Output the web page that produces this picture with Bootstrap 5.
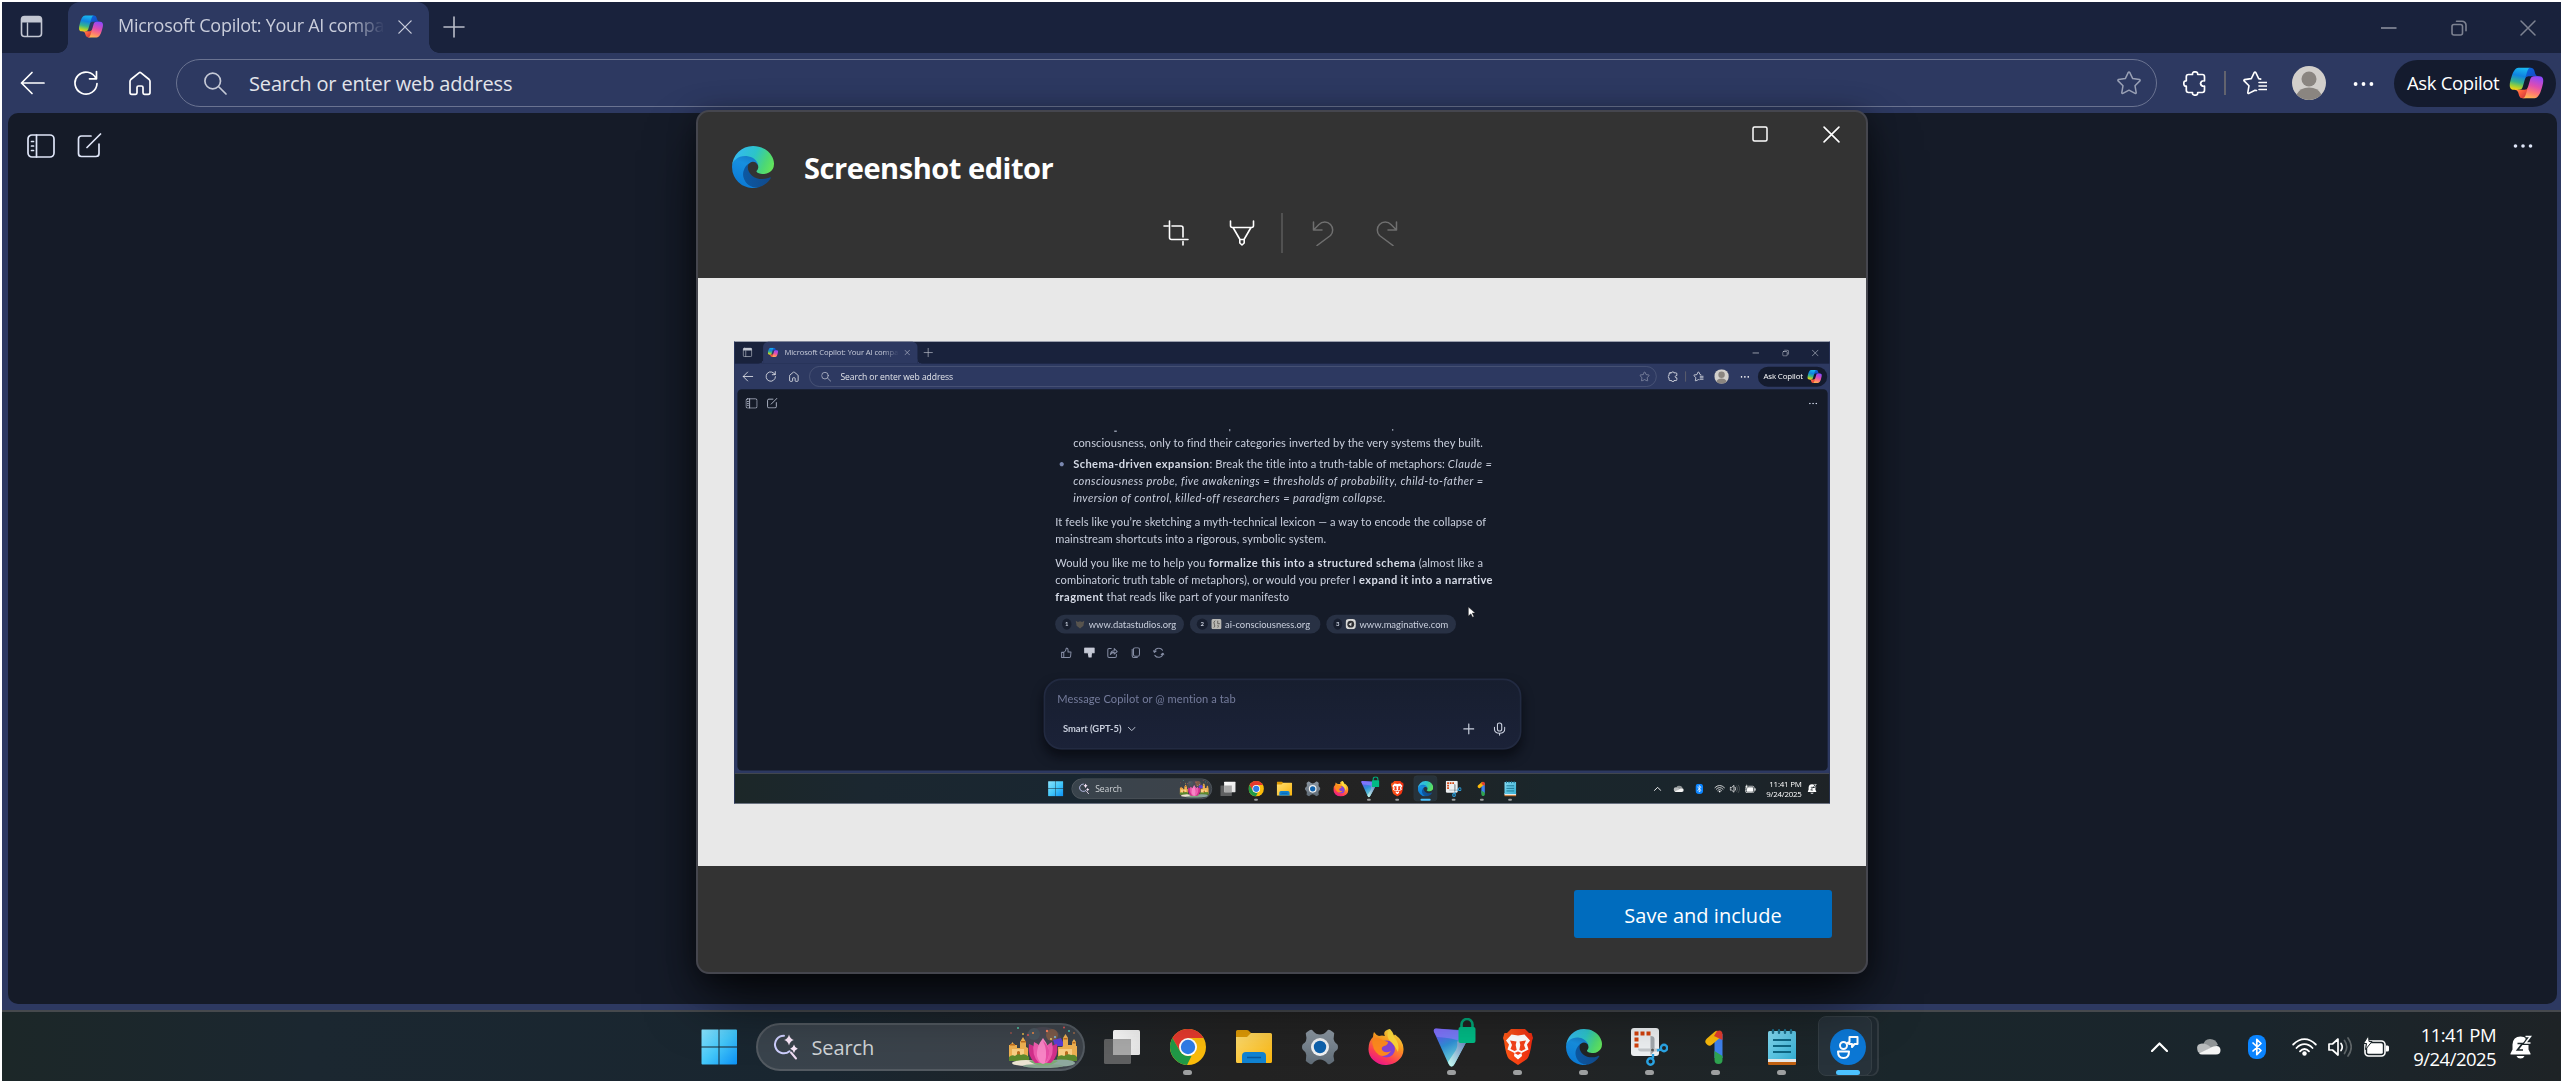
<!DOCTYPE html>
<html lang="en" data-bs-theme="dark">
<head>
<meta charset="utf-8">
<meta name="viewport" content="width=device-width, initial-scale=1">
<title>Screenshot editor</title>
<link href="https://cdn.jsdelivr.net/npm/bootstrap@5.3.0/dist/css/bootstrap.min.css" rel="stylesheet">
<style>
  body { font-family: "Open Sans", "Noto Sans", sans-serif; background: #fff; width: 2563px; height: 1083px; overflow: hidden; }
  svg { display: block; flex: none; }
  .desk { width: 2563px; height: 1083px; border: 2px solid #fff; background: #2d3961; color: #fff; }
  .ln { fill: none; stroke: currentColor; stroke-linecap: round; stroke-linejoin: round; }

  /* browser tab strip */
  .tabstrip { height: 51px; background: #19223c; }
  .ws-cell { width: 66px; padding: 0 0 2px 18px; color: #c3c7d2; }
  .tab-active { width: 361px; height: 51px; padding: 0 0 2px 11px; background: #2d3961; border-radius: 12px 12px 0 0; color: #c9cddb; position: relative; }
  .tab-active::before, .tab-active::after { content: ""; position: absolute; bottom: 0; width: 10px; height: 10px; }
  .tab-active::before { left: -10px; background: radial-gradient(circle at 0 0, transparent 9.5px, #2d3961 10px); }
  .tab-active::after { right: -10px; background: radial-gradient(circle at 100% 0, transparent 9.5px, #2d3961 10px); }
  .tab-name { width: 275px; margin-left: 15px; margin-right: 5px; padding-bottom: 2px; font-size: 18px; letter-spacing: -.28px; white-space: nowrap; -webkit-mask-image: linear-gradient(90deg, #000 84%, transparent 97%); mask-image: linear-gradient(90deg, #000 84%, transparent 97%); }
  .tab-plus { margin: 0 0 2px 14px; color: #b9bdc9; }
  .win-ctl { color: #7d8291; margin-right: -2px; }
  .win-ctl > span { width: 69.5px; display: flex; justify-content: center; }

  /* browser toolbar */
  .toolbar { height: 60px; padding: 0 5px 0 3px; }
  .nav-cell { width: 54px; display: flex; justify-content: center; }
  .omnibox { height: 48px; margin-left: 9px; padding: 0 15px 0 27px; border: 1.5px solid #6a7391; border-radius: 24px; color: #c5c9d6; }
  .omnibox .hint { margin-left: 22px; padding-top: 1px; font-size: 20px; letter-spacing: -.15px; color: #e2e4ea; }
  .omnibox .star { color: #99a0b5; }
  .vbar { width: 2px; height: 24px; margin: 0 17px; background: #62636e; }
  .ask { width: 162px; height: 47px; border-radius: 24px; padding: 0 12px 0 13px; background: #141b2e; font-size: 18.5px; letter-spacing: -.35px; }

  .page-area { margin: 0 4px 6px 6px; background: #151b28; border-radius: 10px; position: relative; color: #dfe6f8; overflow: hidden; }
  .page-tools { padding: 20px 24px 0 19px; }

  /* taskbar */
  .taskbar { height: 71px; border-top: 2px solid #46494d; display: grid; grid-template-columns: 1fr auto 1fr; align-items: center;
    background: linear-gradient(90deg, #1c2728 0, #1b2730 12%, #192630 32%, #222222 48%, #232323 58%, #1a262b 74%, #1a252c 88%, #1e2326 100%); }
  .dock { grid-column: 2; margin-left: 3px; height: 69px; }
  .slot { width: 66px; height: 69px; position: relative; display: flex; align-items: center; justify-content: center; }
  .slot.run::after { content: ""; position: absolute; left: 28.5px; bottom: 6px; width: 9px; height: 5px; border-radius: 3px; background: #9d9fa0; }
  .slot.on::before { content: ""; position: absolute; inset: 4px 6px 5px 5px; border-radius: 8px; background: #27323a; border: 1px solid #343e44; }
  .slot.stack::before { box-shadow: 6px 0 0 -1px #1f2930, 7px 0 0 0 #323b41; right: 9px; left: 3px; }
  .slot.on svg { position: relative; }
  .slot.on::after { left: 21px; bottom: 6px; width: 24px; background: #4cc2ff; }
  .find { width: 329px; height: 48px; margin: 0 4px; padding: 0 6px 0 15px; border-radius: 24px; border: 2px solid #535a61; background: linear-gradient(90deg, #39434c, #3d434a); color: #d0d4d7; font-size: 20px; letter-spacing: -.1px; }
  .find .word { margin-left: 13px; padding-top: 2px; }
  .tray { grid-column: 3; justify-self: end; padding-right: 29px; }
  .clock { width: 95px; margin: 0 14px 0 12px; font-size: 18.5px; line-height: 24px; text-align: right; letter-spacing: -.55px; white-space: nowrap; }

  /* editor dialog */
  .editor { position: absolute; left: 696px; top: 110px; width: 1172px; height: 864px; background: #333; border: 2px solid #45464e; border-radius: 13px; overflow: hidden; color: #fff; }
  .editor-shade { position: absolute; left: 697px; top: 110px; width: 1171px; height: 864px; border-radius: 13px; box-shadow: 0 6px 28px rgba(0,0,0,.45), 0 30px 60px -10px rgba(0,0,0,.75); clip-path: inset(-100px -100px -107px -100px); }
  .editor-head { height: 166px; position: relative; }
  .editor-brand { padding: 34px 0 0 34px; height: 76px; }
  .editor-brand .cap { margin-left: 30px; padding-top: 1px; font-size: 29px; font-weight: 700; letter-spacing: -.45px; line-height: 42px; }
  .editor-win { position: absolute; right: 26px; top: 14px; gap: 55px; }
  .editor-tools { padding: 25px 0 0 465px; }
  .stage { height: 588px; background: #e8e8e8; padding: 63px 0 0 36px; }
  .shot { width: 1096px; height: 463px; overflow: hidden; }
  .shot .desk { transform: scale(.4277); transform-origin: 0 0; filter: blur(1.1px); border-color: #c9cbd3; border-left-color: #2d3961; border-right-color: #2d3961; }
  .btn-save { width: 258px; height: 48px; background: #006cbe; border: 0; border-radius: 3px; color: #fff; font-size: 20px; letter-spacing: .02px; padding: 9px 0 6px; margin: 24px 34px 0 0; }

  /* captured conversation */
  .chat { position: absolute; left: 743px; top: 93px; width: 970px; font-family: Lato, sans-serif; font-size: 26px; letter-spacing: .22px; line-height: 39.4px; color: #c9cfdd; white-space: nowrap; }
  .chat p { margin: 0; }
  .chat .indent { padding-left: 42px; position: relative; }
  .chat .bullet { position: absolute; left: 8px; color: #7b88b0; }
  .chat b { color: #d5dae6; letter-spacing: .95px; }
  .chat i { letter-spacing: .97px; }
  .tails { height: 10px; overflow: hidden; }
  .chip { height: 44px; border-radius: 22px; background: #283144; padding: 0 18px 0 16px; font-size: 22px; letter-spacing: 0; }
  .chip .num { width: 26px; height: 26px; border-radius: 50%; background: #171e2e; font-size: 14px; line-height: 26px; text-align: center; font-weight: 700; margin-right: 8px; }
  .composer { position: absolute; left: 716px; top: 676px; width: 1117px; height: 166px; border-radius: 42px; background: linear-gradient(#171e2f, #1b2238); border: 4px solid #222a41; box-shadow: 0 16px 26px rgba(4,6,12,.65); font-family: Lato, sans-serif; font-size: 26px; padding: 26px 30px 0 28px; color: #c9cfdd; }
  .composer .ph { color: #757c9c; line-height: 34px; letter-spacing: .15px; }
  .composer .model { font-size: 22px; font-weight: 700; margin-left: 13px; }
  .pointer { position: absolute; left: 1708px; top: 508px; }
  .shot .win-ctl { color: #b9bdc9; }
</style>
<script src="https://cdn.jsdelivr.net/npm/bootstrap@5.3.0/dist/js/bootstrap.bundle.min.js"></script>
</head>
<body>

<svg width="0" height="0" class="position-absolute">
  <defs>
    <linearGradient id="gCpA" x1="0" y1="0" x2="1" y2="1"><stop offset="0" stop-color="#0a6be0"/><stop offset="1" stop-color="#1b3fb8"/></linearGradient>
    <linearGradient id="gCpB" x1="0" y1="0" x2="1" y2="1"><stop offset="0" stop-color="#ffb657"/><stop offset=".5" stop-color="#ff5f3d"/><stop offset="1" stop-color="#c02b3c"/></linearGradient>
    <linearGradient id="gCpC" x1=".5" y1="0" x2=".3" y2="1"><stop offset="0" stop-color="#19b6f0"/><stop offset=".35" stop-color="#1083e0"/><stop offset=".65" stop-color="#35b28e"/><stop offset=".85" stop-color="#9fd036"/><stop offset="1" stop-color="#f4d216"/></linearGradient>
    <linearGradient id="gCpD" x1=".7" y1="0" x2=".4" y2="1"><stop offset="0" stop-color="#8c48ff"/><stop offset=".45" stop-color="#e04db0"/><stop offset=".75" stop-color="#ff7a72"/><stop offset="1" stop-color="#ffb152"/></linearGradient>
    <linearGradient id="gEdA" x1="0" y1="0" x2="1" y2="0"><stop offset="0" stop-color="#0c59a4"/><stop offset="1" stop-color="#114a8b"/></linearGradient>
    <linearGradient id="gEdB" x1=".6" y1="0" x2=".3" y2="1"><stop offset="0" stop-color="#1679c4"/><stop offset=".3" stop-color="#168fe0"/><stop offset="1" stop-color="#0a78d4"/></linearGradient>
    <linearGradient id="gEdC" x1="0" y1=".3" x2="1" y2=".6"><stop offset="0" stop-color="#35b8f5"/><stop offset=".5" stop-color="#2cc4c9"/><stop offset=".8" stop-color="#4bd777"/><stop offset="1" stop-color="#62e35c"/></linearGradient>
    <linearGradient id="gWin" gradientUnits="userSpaceOnUse" x1="0" y1="0" x2="36" y2="36"><stop offset="0" stop-color="#8be3fd"/><stop offset=".5" stop-color="#44c8fa"/><stop offset="1" stop-color="#0b90f5"/></linearGradient>
    <linearGradient id="gFold" x1="0" y1="0" x2="1" y2="1"><stop offset="0" stop-color="#ffdf74"/><stop offset="1" stop-color="#fbb50c"/></linearGradient>
    <linearGradient id="gFox" x1=".8" y1="0" x2=".3" y2="1"><stop offset="0" stop-color="#fff04a"/><stop offset=".4" stop-color="#ff9a1f"/><stop offset=".75" stop-color="#ff3f55"/><stop offset="1" stop-color="#e8158c"/></linearGradient>
    <linearGradient id="gPro" x1=".2" y1="0" x2=".7" y2="1"><stop offset="0" stop-color="#6c4cf6"/><stop offset=".4" stop-color="#2f8fd6"/><stop offset="1" stop-color="#8af0d8"/></linearGradient>
    <linearGradient id="gProE" x1="1" y1="0" x2="0" y2="1"><stop offset="0" stop-color="#4b5bb0"/><stop offset="1" stop-color="#c9fff3"/></linearGradient>
    <linearGradient id="gBrave" x1="0" y1="0" x2="1" y2="0"><stop offset="0" stop-color="#ff5a17"/><stop offset="1" stop-color="#ee2a10"/></linearGradient>
    <linearGradient id="gNote" x1="0" y1="0" x2="1" y2="1"><stop offset="0" stop-color="#86dcf4"/><stop offset="1" stop-color="#35aed2"/></linearGradient>
    <linearGradient id="gGear" x1="0" y1="0" x2="0" y2="1"><stop offset="0" stop-color="#8d98a3"/><stop offset="1" stop-color="#5f6b76"/></linearGradient>
    <linearGradient id="gTv" x1="0" y1="0" x2="1" y2="1"><stop offset="0" stop-color="#fff"/><stop offset="1" stop-color="#e2e2e2"/></linearGradient>
  </defs>

  <symbol id="i-copilot" viewBox="2 3 44 42">
    <path fill="url(#gCpA)" d="M34.142 7.325A4.63 4.63 0 0 0 29.7 4H28.35a4.63 4.63 0 0 0-4.554 3.794L21.48 20.407l.575-1.965a4.63 4.63 0 0 1 4.444-3.33h7.853l3.294 1.282 3.175-1.283h-.926a4.63 4.63 0 0 1-4.443-3.325l-1.31-4.461z"/>
    <path fill="url(#gCpB)" d="M14.33 40.656A4.63 4.63 0 0 0 18.779 44h2.87a4.63 4.63 0 0 0 4.629-4.51l.312-12.163-.654 2.233a4.63 4.63 0 0 1-4.443 3.329h-7.919l-2.823-1.532-3.057 1.532h.912a4.63 4.63 0 0 1 4.447 3.344l1.279 4.423z"/>
    <path fill="url(#gCpC)" d="M29.5 4H13.46c-4.583 0-7.332 6.057-9.165 12.113-2.172 7.176-5.014 16.775 3.208 16.775h6.925a4.63 4.63 0 0 0 4.455-3.358 2078.6 2078.6 0 0 1 4.971-17.156c.842-2.843 1.544-5.284 2.621-6.805C27.08 4.716 28.086 4 29.501 4z"/>
    <path fill="url(#gCpD)" d="M18.498 44h16.04c4.582 0 7.332-6.058 9.165-12.115 2.171-7.177 5.013-16.775-3.208-16.775h-6.926a4.63 4.63 0 0 0-4.454 3.358 2084 2084 0 0 1-4.972 17.159c-.842 2.843-1.544 5.285-2.62 6.806-.605.852-1.61 1.567-3.025 1.567z"/>
  </symbol>
  <symbol id="i-edge" viewBox="0 0 256 256"><g transform="translate(-4.63 -4.92)">
    <path fill="url(#gEdA)" d="M235.68 195.46a93.73 93.73 0 0 1-10.54 4.71 101.87 101.87 0 0 1-35.9 6.46c-47.32 0-88.54-32.55-88.54-74.32A31.48 31.48 0 0 1 117.13 105c-42.8 1.8-53.8 46.4-53.8 72.53 0 73.88 68.09 81.37 82.76 81.37 7.91 0 19.84-2.3 27-4.56l1.31-.44a128.34 128.34 0 0 0 66.6-52.8 4 4 0 0 0-5.32-5.64z"/>
    <path fill="url(#gEdB)" d="M110.34 246.34A79.2 79.2 0 0 1 87.6 225a80.72 80.72 0 0 1 29.53-120c3.12-1.47 8.45-4.13 15.54-4a32.35 32.35 0 0 1 25.69 13 31.88 31.88 0 0 1 6.36 18.66c0-.21 24.46-79.6-80-79.6-43.9 0-80 41.66-80 78.21a130.15 130.15 0 0 0 12.11 56 128 128 0 0 0 156.38 67.11 75.55 75.55 0 0 1-62.78-8z"/>
    <path fill="url(#gEdC)" d="M156.94 153.78c-.81 1.05-3.3 2.5-3.3 5.66 0 2.61 1.7 5.12 4.72 7.23 14.38 10 41.49 8.68 41.56 8.68a59.56 59.56 0 0 0 30.27-8.35A61.38 61.38 0 0 0 260.63 114c.26-22.41-8-37.31-11.34-43.91C228.09 28.76 182.35 5 132.61 5A128 128 0 0 0 4.63 131.2c.48-36.54 36.8-66.05 80-66.05 3.5 0 23.46.34 42 10.07 16.34 8.58 24.9 18.94 30.85 29.21 6.18 10.67 7.28 24.15 7.28 29.52s-2.74 13.33-7.82 19.83z"/></g>
  </symbol>
  <symbol id="i-star" viewBox="0 0 24 24"><path class="ln" stroke-width="1.5" d="M11.3 1.4a.8.8 0 0 1 1.4 0l3 6.2 6.8 1a.8.8 0 0 1 .4 1.3L18 14.7l1.2 6.9a.8.8 0 0 1-1.1.8L12 19.2l-6.1 3.2a.8.8 0 0 1-1.1-.8L6 14.7 1.1 9.9a.8.8 0 0 1 .4-1.3l6.8-1z"/></symbol>
  <symbol id="i-dots" viewBox="0 0 21 6"><g fill="currentColor"><circle cx="2.6" cy="3" r="1.9"/><circle cx="10.5" cy="3" r="1.9"/><circle cx="18.4" cy="3" r="1.9"/></g></symbol>
  <symbol id="i-x" viewBox="0 0 16 16"><path class="ln" stroke-width="1.5" d="M1 1l14 14M15 1L1 15"/></symbol>

  <symbol id="i-win" viewBox="0 0 36 36"><path fill="url(#gWin)" d="M1 .5h16.5v17H.5V1.500q0-1 .5-1zM18.500.5H35q1 0 1 1v16H18.500zM.5 18.500h17v17h-16q-1 0-1-1zM18.500 18.500H36v16q0 1-1 1H18.500z"/></symbol>
  <symbol id="i-spark" viewBox="0 0 26 26"><g class="ln" stroke-width="2"><path stroke="#cfd0ff" d="M11 1.700A8.800 8.800 0 1 0 16.500 17.200"/><path stroke="#f0ddf4" d="M18 18.500l5 6"/></g><path fill="#fbe9fb" d="M16 .5q1 4.300 4.800 5.500Q17 7.200 16 11.500 15 7.200 11.200 6 15 4.800 16 .5zM21 10.500q.8 3.300 3.800 4.200-3 .9-3.800 4.300-.8-3.400-3.800-4.300 3-.9 3.800-4.200z"/></symbol>
  <symbol id="i-lotus" viewBox="0 0 68 42">
    <ellipse cx="34" cy="13" rx="18" ry="12" fill="#4b4a55"/><circle cx="43" cy="9" r="6" fill="#7d5b49"/><circle cx="25" cy="8" r="6" fill="#4b565f"/><path fill="#5a3fd8" d="M44 14l8-2 4 8H46z"/>
    <path fill="#f0b252" d="M0 34V19h1.500l2-3 2 3H8v3h3v-6l3-5 3 5v5l2 1V34zM49 34V21h4l1-1V12l2.500-4L59 12v7h4v-3l2-3 2 3v4h1v14z"/>
    <path fill="#fad084" d="M3 23h12v9H3zM50 23h13v9H50z"/><path fill="#bd6f1f" d="M1 18h5v1.500H1zM12 15h5v1.500h-5zM54.500 12h4v1.500h-4zM63.500 16h3v1.500h-3zM56 26q1.500-2 3 0v5h-3zM8 26q1.500-2 3 0v5H8z"/>
    <path fill="#5d8a2d" d="M0 31q3-3 6-1 3-3 6-1 4-2 8 2v4H0zM48 31q4-3 7-1 4-3 7-1 4-1 6 2v4H48z"/>
    <ellipse cx="17" cy="37" rx="14" ry="3" fill="#ece3d2"/><ellipse cx="52" cy="37" rx="14" ry="3.500" fill="#8fa99f"/><ellipse cx="34" cy="40" rx="20" ry="2" fill="#86a38f"/>
    <path fill="#7cac74" d="M20 35q8-3 14 2 7-5 15-2-7 5-15 4.500Q26 39.500 20 35z"/>
    <path fill="#d22f8b" d="M20 18q-2 12 6 19h16q8-7 6-19-5 1-7 4-7-3-14 0-3-3-7-4z"/><path fill="#ef5cae" d="M25 16q-3 13 5 21h8q8-8 5-21-6 3-8 9-3-6-10-9z"/><path fill="#f985c6" d="M34 12q-7 9-6 18 2 7 6 8 4-1 6-8 1-9-6-18z"/><path fill="#e84ea6" d="M34 15q5 9 2 22 5-5 4-13-2-6-6-9z"/>
    <g><circle cx="9" cy="2" r="1" fill="#52c9a8"/><circle cx="2" cy="7" r=".8" fill="#d65b4b"/><circle cx="14" cy="8" r="1" fill="#e7b84a"/><circle cx="19" cy="9" r="1" fill="#e05757"/><circle cx="24" cy="7" r="1" fill="#f08b46"/><circle cx="38" cy="5" r="1.200" fill="#ff815c"/><circle cx="46" cy="11" r="1" fill="#79c7ea"/><circle cx="55" cy="1.500" r=".9" fill="#ef5555"/><circle cx="60" cy="5" r=".9" fill="#47d8c5"/><circle cx="65" cy="7" r=".8" fill="#dd8549"/><circle cx="42" cy="13" r=".9" fill="#ffdd61"/></g>
  </symbol>
  <symbol id="i-tv" viewBox="0 0 36 34"><rect x="0" y="9" width="27" height="25" rx="1.500" fill="#5f6061"/><rect x="9" y="0" width="27" height="25" rx="1.500" fill="url(#gTv)"/><path d="M9 9h18v16H9z" fill="#a9a9a9"/></symbol>
  <symbol id="i-chrome" viewBox="0 0 36 36"><circle cx="18" cy="18" r="18" fill="#fbbc0b"/><path fill="#e5392e" d="M2.400 9A18 18 0 0 1 33.600 9H18l-7.800 13.500z"/><path fill="#219a47" d="M2.400 9l7.800 13.500Q14 27 18 27h3.500L17 36A18 18 0 0 1 2.400 9z"/><circle cx="18" cy="18" r="9" fill="#fff"/><circle cx="18" cy="18" r="7.200" fill="#2f7de9"/></symbol>
  <symbol id="i-folder" viewBox="0 0 36 33"><path fill="#dd9a06" d="M0 1.500Q0 0 1.500 0H11q1.500 0 3 2l2 2v6H0z"/><path fill="url(#gFold)" d="M0 7h11l4-4h19.500Q36 3 36 4.500v27q0 1.500-1.500 1.500h-33Q0 33 0 31.500z"/><path fill="#1183d2" d="M6 33v-7q0-4 4-4h16q4 0 4 4v7z"/><path stroke="#0a579c" stroke-width="1.500" d="M11 27.500h14"/></symbol>
  <symbol id="i-gear" viewBox="0 0 36 36"><path fill="url(#gGear)" d="M8 1q2-1 3 1 3 3.500 7 3.500T25 2q1-2 3-1l3 2q2 1 1 3-1 4 .5 6.500 1.500 2 2.500 2.500 1 1 1 3t-1 3q-2 1-3 3-1 2.500 0 6 1 2-1 3l-3 2q-2 1-3-1-3-3.500-7-3.500T11 34q-1 2-3 1l-3-2q-2-1-1-3 1-4-.5-6.500Q2 21.500 1 21q-1-1-1-3t1-3q2-1 3-3 1-2.500 0-6-1-2 1-3z"/><circle cx="18" cy="18" r="9" fill="#f0f1f2"/><circle cx="18" cy="18" r="6.200" fill="#0f62ad"/></symbol>
  <symbol id="i-fox" viewBox="0 0 36 36"><path fill="url(#gFox)" d="M22 0q3 3 4 6.500l1-1Q36 12 35.500 21A17.500 15.500 0 0 1 .5 20Q.5 12 5 8q0-3 1-5 2 3 5 4 3-1 6 0-3-5 5-7z"/><circle cx="18.500" cy="20" r="8.500" fill="#8543d6"/><path fill="#ff8a1e" d="M4 10q5-3 10 1 3 1 6 2 0 3-4 4-3 1-2 4 3 4 9 1-5 7-12 4Q4 21 4 10z"/><path fill="#ffe23e" d="M21 0q3 3 5 8 6 6 4 15-4-8-9-12-3-5 0-11z" opacity=".8"/></symbol>
  <symbol id="i-proton" viewBox="0 0 44 50"><path fill="url(#gPro)" d="M3 10.500q-3 0-2 3.500l14.500 32q3 5 6 0L37 17q2-4-2-4.500z"/><path fill="#8a7cff" d="M3 10.500q-3 0-2 3.500l3 5q18 1 24 5l4-11z" opacity=".75"/><path fill="url(#gProE)" d="M37 17q2-4-2-4.500L24 24q1 4-1 8l-8 12q3 8 6.500 2z"/><path fill="none" stroke="#00a878" stroke-width="2.600" d="M28.500 10V6.500a5.500 5.500 0 0 1 11 0V10"/><rect x="25.500" y="9" width="17" height="16" rx="2" fill="#00ba85"/></symbol>
  <symbol id="i-brave" viewBox="0 0 30 36"><path fill="url(#gBrave)" d="M8 0h14l4 4 2.500 0L30 9l-1 3q-2 15-5 18l-9 6-9-6Q3 27 1 12L0 9l1.500-5H4z"/><path fill="#fff" d="M8.500 5.500l6.500 1 6.500-1 5.500 6-3 4 1.500 5-7 3.500.5 3-4 3.500-4-3.500.5-3-7-3.500 1.500-5-3-4z"/><path fill="#f4421b" d="M7 11.500l6.500 1-.8 3.500 1 5-2.200 1-4-2 1.500-4zM23 11.500l-6.500 1 .8 3.500-1 5 2.200 1 4-2-1.500-4zM11.500 24l3.500-1.500 3.500 1.500-3.500 2z"/></symbol>
  <symbol id="i-snip" viewBox="0 0 37 38"><rect x="0" y="0" width="28" height="28" rx="3" fill="#edf0f2"/><path fill="#d3410b" d="M3.500 3.500h4v4h-4zM9.500 3.500h4v4h-4zM15.500 3.500h4v4h-4zM3.500 9.500h4v4h-4zM3.500 15.500h4v4h-4z"/><path fill="#a2a8ad" d="M19.500 8q4 0 4 3v12l-4 4z"/><path fill="#c4c8cb" d="M7 20.500h20v3H10q-3 0-3-3z"/><circle cx="21.500" cy="22" r="1.500" fill="#555"/><g fill="none" stroke="#2aa4e4" stroke-width="2.400"><circle cx="33" cy="20" r="3.200"/><circle cx="19.500" cy="33.500" r="3.200"/><path d="M22 30.500v-4.500M26 22.500l4-1"/></g></symbol>
  <symbol id="i-gone" viewBox="0 0 18 34"><path stroke="#3f82ee" stroke-width="8" d="M13.500 4v24"/><path stroke="#f9b90a" stroke-width="8" stroke-linecap="round" d="M4.500 11.500L12 5"/><path fill="#e33c2e" d="M9 6l3-5q5-2 5.500 3v6z"/><path fill="#2fa350" d="M9.500 21l8 5v4a4 4 0 0 1-8 0z"/></symbol>
  <symbol id="i-note" viewBox="0 0 28 36"><rect x="0" y="31" width="28" height="5" rx="1" fill="#c06112"/><path fill="#e8e8e8" d="M0 28h28v5H0z"/><path fill="url(#gNote)" d="M0 3.500Q0 2 1.500 2h25Q28 2 28 3.500V30H0z"/><path stroke="#0e6784" stroke-width="1.800" d="M5 11h18M5 17h18M5 23h18"/><path stroke="#1c6f8b" stroke-width="2.400" stroke-linecap="round" d="M5 1.200v2.600M11 1.200v2.600M17 1.200v2.600M23 1.200v2.600"/></symbol>
  <symbol id="i-feed" viewBox="0 0 36 36"><circle cx="18" cy="18" r="18" fill="#0c78d6"/><g class="ln" stroke="#fff" stroke-width="2"><circle cx="13.500" cy="16.500" r="3.500"/><path d="M8 22.500h11q0 6.500-5.500 6.500T8 22.500zM19.500 8h8v7h-3l-2.500 3v-3h-2.500l-2-1 2-1z"/></g></symbol>
</svg>

<div class="desk d-flex flex-column" id="desktop">
  <header>
    <div class="tabstrip d-flex align-items-center">
      <div class="ws-cell"><svg width="23" height="23" viewBox="0 0 23 23"><rect class="ln" stroke-width="1.600" x="1.500" y="1.500" width="20" height="20" rx="3"/><path fill="currentColor" d="M1.500 7.500V4q0-2.500 2.500-2.500h15q2.500 0 2.500 2.500v3.500z"/><path class="ln" stroke-width="1.400" d="M7.500 8v13"/></svg></div>
      <div class="tab-active d-flex align-items-center">
        <svg width="24" height="23"><use href="#i-copilot"/></svg>
        <div class="tab-name">Microsoft Copilot: Your AI compan</div>
        <svg width="14" height="14"><use href="#i-x"/></svg>
      </div>
      <svg class="tab-plus" width="22" height="22" viewBox="0 0 22 22"><path class="ln" stroke-width="1.600" d="M11 1v20M1 11h20"/></svg>
      <div class="win-ctl d-flex ms-auto align-items-center">
        <span><svg width="16" height="16" viewBox="0 0 16 16"><path stroke="currentColor" stroke-width="1.800" d="M0 8h15.500"/></svg></span>
        <span><svg width="16" height="16" viewBox="0 0 16 16"><g class="ln" stroke-width="1.600"><rect x="1" y="4.500" width="10.500" height="10.500" rx="2"/><path d="M5.500 1.200H11a4 4 0 0 1 4 4v5.500"/></g></svg></span>
        <span><svg width="16" height="16"><use href="#i-x"/></svg></span>
      </div>
    </div>
    <div class="toolbar d-flex align-items-center">
      <div class="nav-cell"><svg width="25" height="24" viewBox="0 0 25 24"><path class="ln" stroke-width="1.700" d="M24 12H1.500M12 1.500L1.500 12 12 22.500"/></svg></div>
      <div class="nav-cell"><svg width="26" height="26" viewBox="0 0 26 26"><path class="ln" stroke-width="1.700" d="M23 8.500A11 11 0 1 0 24 13.500M23.500 1.500v7.300h-7"/></svg></div>
      <div class="nav-cell"><svg width="24" height="25" viewBox="0 0 24 25"><path class="ln" stroke-width="1.700" d="M2 10.500q0-1.200.8-2L11 1.800q1-.8 2 0l8.200 6.700q.8.800.8 2v11q0 1.800-1.800 1.800h-3.700q-1.500 0-1.500-1.500v-5.300q0-1.500-1.500-1.500h-3Q9 15 9 16.500v5.300q0 1.500-1.500 1.500H3.800Q2 23.300 2 21.500z"/></svg></div>
      <div class="omnibox flex-grow-1 d-flex align-items-center">
        <svg width="23" height="23" viewBox="0 0 23 23"><path class="ln" stroke-width="1.700" d="M15 15l7 7M16.500 9a7.800 7.800 0 1 1-15.600 0 7.800 7.800 0 0 1 15.600 0z"/></svg>
        <span class="hint">Search or enter web address</span>
        <svg class="star ms-auto" width="24" height="24"><use href="#i-star"/></svg>
      </div>
      <svg width="24" height="25" viewBox="0 0 24 25" style="margin-left:26px"><path class="ln" stroke-width="1.700" d="M5.500 3.500h4q-.3-2.700 2.500-2.700t2.700 2.700h4.600q2.200 0 2.200 2.200v4.100q-3.500-.3-4 2.700.5 3.100 4 2.700v4.100q0 2.200-2.200 2.200h-4.600Q14.800 24.200 12 24.200t-2.500-2.700h-4q-2.200 0-2.200-2.200v-4.100Q.8 15.300.8 12.500t2.500-2.700V5.700q0-2.200 2.200-2.200z"/></svg>
      <div class="vbar"></div>
      <svg width="24" height="24" viewBox="0 0 24 24"><path class="ln" stroke-width="1.600" d="M13.500 19.500L12 19.200l-6.100 3.200a.8.800 0 0 1-1.100-.8L6 14.700 1.100 9.900a.8.800 0 0 1 .4-1.300l6.800-1 3-6.200a.8.800 0 0 1 1.400 0l3 6.200 2 .5M16 11.500h7.500M16 15h7.500M16 18.500h7.500"/></svg>
      <svg width="34" height="34" viewBox="0 0 34 34" style="margin-left:25px"><circle cx="17" cy="17" r="17" fill="#d2cfcb"/><circle cx="17" cy="13" r="7.500" fill="#8a8580"/><path fill="#8a8580" d="M4.500 28.500Q8 21.500 17 21.500t12.500 7A17 17 0 0 1 4.500 28.500z"/></svg>
      <svg width="21" height="6" style="margin:1px 20px 0 27px"><use href="#i-dots"/></svg>
      <div class="ask d-flex align-items-center justify-content-between"><span>Ask Copilot</span><svg width="35" height="32"><use href="#i-copilot"/></svg></div>
    </div>
  </header>
  <main class="page-area flex-grow-1">
    <div class="page-tools d-flex align-items-center">
      <svg width="28" height="24" viewBox="0 0 28 24"><g class="ln" stroke-width="1.700"><rect x="1" y="1" width="26" height="22" rx="4"/><path d="M9.500 1v22M4.500 7.500h2M4.500 12h2M4.500 16.500h2"/></g></svg>
      <svg width="25" height="25" viewBox="0 0 25 25" style="margin-left:22px"><path class="ln" stroke-width="1.700" d="M14 3H4.500Q1.500 3 1.500 6v14.500q0 3 3 3H19q3 0 3-3V11M10 14.500L23.500 1"/></svg>
      <svg class="ms-auto" width="20" height="6"><use href="#i-dots"/></svg>
    </div>
  </main>
  <footer class="taskbar">
    <div class="dock d-flex align-items-center">
      <div class="slot"><svg width="36" height="36"><use href="#i-win"/></svg></div>
      <div class="find d-flex align-items-center"><svg width="26" height="26"><use href="#i-spark"/></svg><span class="word">Search</span><svg class="ms-auto" width="68" height="42"><use href="#i-lotus"/></svg></div>
      <div class="slot"><svg width="36" height="34"><use href="#i-tv"/></svg></div>
      <div class="slot run"><svg width="36" height="36"><use href="#i-chrome"/></svg></div>
      <div class="slot"><svg width="36" height="33"><use href="#i-folder"/></svg></div>
      <div class="slot"><svg width="36" height="36"><use href="#i-gear"/></svg></div>
      <div class="slot"><svg width="36" height="36"><use href="#i-fox"/></svg></div>
      <div class="slot run"><svg width="44" height="50" style="margin:-8px 0 0 6px"><use href="#i-proton"/></svg></div>
      <div class="slot run"><svg width="30" height="36"><use href="#i-brave"/></svg></div>
      <div class="slot run" data-app="edge"><svg width="36" height="36"><use href="#i-edge"/></svg></div>
      <div class="slot run"><svg width="37" height="38"><use href="#i-snip"/></svg></div>
      <div class="slot run"><svg width="18" height="34" style="margin-right:4px"><use href="#i-gone"/></svg></div>
      <div class="slot run"><svg width="28" height="36"><use href="#i-note"/></svg></div>
      <div class="slot run on stack" data-app="feedback"><svg width="36" height="36"><use href="#i-feed"/></svg></div>
    </div>
    <div class="tray d-flex align-items-center">
      <svg width="17" height="10" viewBox="0 0 17 10"><path class="ln" stroke-width="2.200" d="M1 9l7.500-7.500L16 9"/></svg>
      <svg width="25" height="16" viewBox="0 0 25 16" style="margin-left:28px"><path fill="#8f9496" d="M7 7q1-7 7-7t8 6l-8 4z"/><path fill="#b9bcbd" d="M2 13Q-1 5 6 4.500q5 0 9 4L5 15z"/><path fill="#f4f4f4" d="M3 14.500L16 8q8-3 8.500 3 0 4.500-4.500 4.500H6q-2 0-3-1z"/></svg>
      <svg width="18" height="24" viewBox="0 0 18 24" style="margin-left:27px"><rect width="18" height="24" rx="8" fill="#0a84ff"/><path fill="none" stroke="#fff" stroke-width="1.700" stroke-linejoin="round" d="M4.500 7.500l8.500 8-4.200 4.200V4.300L13 8.500l-8.500 8"/></svg>
      <svg width="25" height="18" viewBox="0 0 25 18" style="margin-left:26px"><g class="ln" stroke-width="1.800"><path d="M1.200 6.500Q6.500 1.200 12.500 1.200T23.800 6.500M4.500 10Q8 6.200 12.500 6.200T20.500 10M8 13.300Q10 11 12.500 11T17 13.300"/></g><circle cx="12.500" cy="15.500" r="2.200" fill="#fff"/></svg>
      <svg width="24" height="20" viewBox="0 0 24 20" style="margin-left:11px"><path class="ln" stroke-width="1.700" d="M1 7v6h3.500l5.500 5V2L4.500 7zM13 6.500q2.500 3.500 0 7"/><g fill="none" stroke="#5d6366" stroke-width="1.700" stroke-linecap="round"><path d="M16.500 3.500q4.500 6.500 0 13M20 1q6.500 9 0 18"/></g></svg>
      <svg width="25" height="21" viewBox="0 0 25 21" style="margin-left:12px"><rect class="ln" stroke-width="1.600" x="1" y="5" width="20" height="15" rx="3.500"/><rect fill="#fff" x="3.200" y="7.200" width="15.600" height="10.600" rx="1.500"/><path fill="#fff" d="M22 9.500h1.500q1.500 0 1.500 1.500v3q0 1.500-1.500 1.500H22z"/><path fill="#fff" stroke="#1b2529" stroke-width="1" d="M4.500-.5L-.5 7.500h3l-1 6L8 5.500H5z"/></svg>
      <div class="clock"><div>11:41 PM</div><div>9/24/2025</div></div>
      <svg width="22" height="24" viewBox="0 0 22 24"><path fill="#fff" d="M10.500 1.500q7.500 0 8 8v5l2 4v1H.5v-1l2-4v-5q.5-8 8-8zM6.500 21h8q-1 2.500-4 2.500T6.500 21z"/><path fill="none" stroke="#1b2529" stroke-width="4" d="M15.500 2.500h4l-4 5.500h4"/><path fill="none" stroke="#fff" stroke-width="1.600" d="M15.500 1.500h5l-5 6.500h5"/><path fill="none" stroke="#1b2529" stroke-width="1.700" d="M7.500 8.500h5L7.500 15h5.500"/></svg>
    </div>
  </footer>
</div>

<div class="editor-shade"></div>
<section class="editor">
  <div class="editor-head">
    <div class="editor-brand d-flex"><svg width="42" height="42"><use href="#i-edge"/></svg><div class="cap">Screenshot editor</div></div>
    <div class="editor-win d-flex">
      <svg width="16" height="16" viewBox="0 0 16 16"><rect class="ln" stroke-width="1.500" x="1" y="1" width="14" height="14" rx="1.500"/></svg>
      <svg width="17" height="17"><use href="#i-x"/></svg>
    </div>
    <div class="editor-tools d-flex align-items-center">
      <svg width="26" height="26" viewBox="0 0 26 26"><path class="ln" stroke-width="1.600" d="M6.500 1v16.500q0 2 2 2H25M1 6h4M9 6h9q2 0 2 2v9M20 21.500V25"/></svg>
      <svg width="26" height="26" viewBox="0 0 26 26" style="margin-left:40px"><path class="ln" stroke-width="1.600" d="M1.500 1v4.500q0 2 2 2h19q2 0 2-2V1M4 7.500l7 12M22 7.500l-7 12M10.800 19.500h4.400v3.500L13 25l-2.200-2z"/></svg>
      <div style="width:2px;height:40px;background:#515151;margin:0 29px 0 26px"></div>
      <svg width="22" height="25" viewBox="0 0 22 25" color="#6f6f6f"><path class="ln" stroke-width="1.500" d="M1.500 1v8H10M1.500 9l5.500-5.500a8 8 0 0 1 11.500 0 8 8 0 0 1 0 11L5 24.500"/></svg>
      <svg width="22" height="25" viewBox="0 0 22 25" color="#6f6f6f" style="margin-left:42px"><path class="ln" stroke-width="1.500" d="M20.500 1v8H12M20.500 9L15 3.500a8 8 0 0 0-11.500 0 8 8 0 0 0 0 11L17 24.500"/></svg>
    </div>
  </div>
  <div class="stage"><div class="shot"><div class="desk d-flex flex-column" id="capture"></div></div></div>
  <div class="d-flex justify-content-end"><button class="btn btn-save" type="button">Save and include</button></div>
</section>

<template id="conversation">
  <div class="chat">
    <div class="tails"><svg width="940" height="8" viewBox="0 0 940 8"><path stroke="#8e95a6" stroke-width="3" d="M138 5h6M408 0v5M789 0v4"/></svg></div>
    <div class="indent" style="margin-top:2px">consciousness, only to find their categories inverted by the very systems they built.</div>
    <div class="indent" style="margin-top:11px"><span class="bullet">•</span><b>Schema-driven expansion</b>: Break the title into a truth-table of metaphors: <i>Claude =<br>consciousness probe, five awakenings = thresholds of probability, child-to-father =<br>inversion of control, killed-off researchers = paradigm collapse.</i></div>
    <p style="margin-top:17px">It feels like you’re sketching a myth-technical lexicon — a way to encode the collapse of<br>mainstream shortcuts into a rigorous, symbolic system.</p>
    <p style="margin-top:17px">Would you like me to help you <b>formalize this into a structured schema</b> (almost like a<br>combinatoric truth table of metaphors), or would you prefer I <b>expand it into a narrative<br>fragment</b> that reads like part of your manifesto</p>
    <div class="d-flex" style="gap:14px;margin-top:22px">
      <div class="chip d-flex align-items-center" style="width:301px"><span class="num">1</span><svg width="24" height="24" viewBox="0 0 24 24"><path fill="#58544e" d="M2 4l5 3 5-2 5 2 5-3-2 12-8 6-8-6z"/></svg><span class="ms-2">www.datastudios.org</span></div>
      <div class="chip d-flex align-items-center" style="width:305px"><span class="num">2</span><svg width="24" height="24" viewBox="0 0 24 24"><rect width="24" height="24" rx="4" fill="#b8b7b3"/><path fill="none" stroke="#55534f" stroke-width="2" d="M9 4q-5 3-2 8t-1 8M15 4v7h5M15 14q3 3 0 6"/></svg><span class="ms-2">ai-consciousness.org</span></div>
      <div class="chip d-flex align-items-center" style="width:303px"><span class="num">3</span><svg width="24" height="24" viewBox="0 0 24 24"><rect width="24" height="24" rx="8" fill="#d8d8d6"/><circle cx="12" cy="12" r="8" fill="#2f3034"/><path fill="#ddd" d="M7 12l7-4-1 9z"/></svg><span class="ms-2">www.maginative.com</span></div>
    </div>
    <div class="d-flex align-items-center ln" style="gap:28px;margin:32px 0 0 13px;color:#858da4;stroke-width:2.400">
      <svg width="26" height="26" viewBox="0 0 26 26"><path d="M2 12h5v12H2zM7 12q5-2 6-10 4 0 4 4v5h7l-1 10q0 3-3 3H7z"/></svg>
      <svg width="26" height="26" viewBox="0 0 26 26" style="color:#c6cad6"><path fill="#c6cad6" d="M2 2h22v11h-6q-1 3-1 10h-5q-1-7-2-10H2z"/></svg>
      <svg width="26" height="26" viewBox="0 0 26 26"><path d="M10 3H5Q2 3 2 6v15q0 3 3 3h14q3 0 3-3v-4M8 17q1-9 9-9V3l7 7-7 6v-4q-6 0-9 5z"/></svg>
      <svg width="26" height="26" viewBox="0 0 26 26"><rect x="8" y="1" width="14" height="20" rx="4"/><path d="M5 5v15q0 4 4 4h8"/></svg>
      <svg width="26" height="26" viewBox="0 0 26 26"><path d="M3 11a10.500 10.500 0 0 1 19-4M23 15a10.500 10.500 0 0 1-19 4M0 8l3 4 4-3M26 18l-3-4-4 3"/></svg>
    </div>
  </div>
  <svg class="pointer" width="18" height="26" viewBox="0 0 18 26"><path fill="#fff" stroke="#222" d="M1 1l16 14h-7l4 8-3 2-4-8-6 5z"/></svg>
  <div class="composer">
    <div class="ph">Message Copilot or @ mention a tab</div>
    <div class="d-flex align-items-center" style="margin-top:37px">
      <span class="model">Smart (GPT-5)</span>
      <svg width="18" height="12" viewBox="0 0 18 12" style="margin-left:15px"><path class="ln" stroke-width="2.200" d="M1 2l8 8 8-8"/></svg>
      <svg class="ms-auto" width="26" height="26" viewBox="0 0 26 26"><path class="ln" stroke-width="2.800" d="M13 1v24M1 13h24"/></svg>
      <svg width="28" height="32" viewBox="0 0 28 32" style="margin:0 3px 0 45px"><path class="ln" stroke-width="2.600" d="M14 2q5 0 5 5v9q0 5-5 5t-5-5V7q0-5 5-5zM2 12v4q0 10 12 10t12-10v-4M14 26v5"/></svg>
    </div>
  </div>
</template>

<script>
  // The preview is the same desktop, with the conversation open and Edge in front
  const capture = document.getElementById('capture');
  for (const part of document.getElementById('desktop').children) capture.append(part.cloneNode(true));
  capture.querySelector('.page-area').append(document.getElementById('conversation').content.cloneNode(true));
  capture.querySelector('[data-app="feedback"]').remove();
  capture.querySelector('[data-app="edge"]').classList.add('on');
</script>
</body>
</html>
